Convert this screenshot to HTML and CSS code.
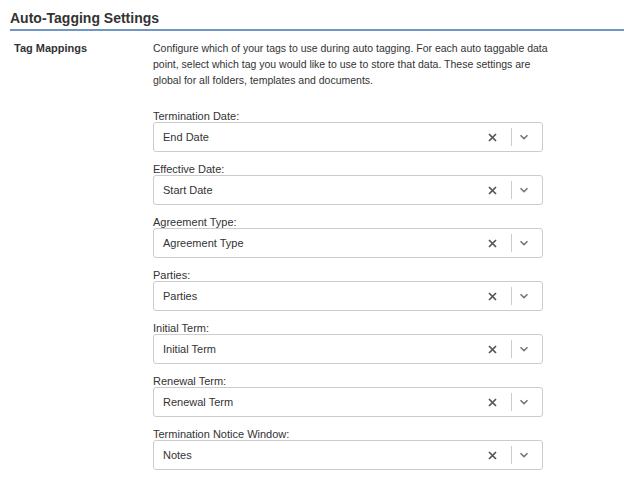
FILE: index.html
```html
<!DOCTYPE html>
<html lang="en">
<head>
    <meta charset="UTF-8">
    <title>Auto-Tagging Settings</title>
    <link rel="stylesheet" href="styles.css">
</head>
<body>
    <h2 class="section-title">Auto-Tagging Settings</h2>

    <div class="setting-row">
        <div class="setting-name">Tag Mappings</div>
        <div class="setting-body">
            <p class="setting-desc">Configure which of your tags to use during auto tagging. For each auto taggable data point, select which tag you would like to use to store that data. These settings are global for all folders, templates and documents.</p>

            <div class="field">
                <label>Termination Date:</label>
                <div class="select">
                    <span class="select-value">End Date</span>
                    <svg class="clear" width="9" height="9" viewBox="0 0 9 9"><path d="M1 1 L8 8 M8 1 L1 8" stroke="#555" stroke-width="1.7"/></svg>
                    <span class="sep"></span>
                    <svg class="chev" width="10" height="6" viewBox="0 0 10 6"><path d="M1.5 1.2 L5 4.6 L8.5 1.2" fill="none" stroke="#777" stroke-width="1.6"/></svg>
                </div>
            </div>

            <div class="field">
                <label>Effective Date:</label>
                <div class="select">
                    <span class="select-value">Start Date</span>
                    <svg class="clear" width="9" height="9" viewBox="0 0 9 9"><path d="M1 1 L8 8 M8 1 L1 8" stroke="#555" stroke-width="1.7"/></svg>
                    <span class="sep"></span>
                    <svg class="chev" width="10" height="6" viewBox="0 0 10 6"><path d="M1.5 1.2 L5 4.6 L8.5 1.2" fill="none" stroke="#777" stroke-width="1.6"/></svg>
                </div>
            </div>

            <div class="field">
                <label>Agreement Type:</label>
                <div class="select">
                    <span class="select-value">Agreement Type</span>
                    <svg class="clear" width="9" height="9" viewBox="0 0 9 9"><path d="M1 1 L8 8 M8 1 L1 8" stroke="#555" stroke-width="1.7"/></svg>
                    <span class="sep"></span>
                    <svg class="chev" width="10" height="6" viewBox="0 0 10 6"><path d="M1.5 1.2 L5 4.6 L8.5 1.2" fill="none" stroke="#777" stroke-width="1.6"/></svg>
                </div>
            </div>

            <div class="field">
                <label>Parties:</label>
                <div class="select">
                    <span class="select-value">Parties</span>
                    <svg class="clear" width="9" height="9" viewBox="0 0 9 9"><path d="M1 1 L8 8 M8 1 L1 8" stroke="#555" stroke-width="1.7"/></svg>
                    <span class="sep"></span>
                    <svg class="chev" width="10" height="6" viewBox="0 0 10 6"><path d="M1.5 1.2 L5 4.6 L8.5 1.2" fill="none" stroke="#777" stroke-width="1.6"/></svg>
                </div>
            </div>

            <div class="field">
                <label>Initial Term:</label>
                <div class="select">
                    <span class="select-value">Initial Term</span>
                    <svg class="clear" width="9" height="9" viewBox="0 0 9 9"><path d="M1 1 L8 8 M8 1 L1 8" stroke="#555" stroke-width="1.7"/></svg>
                    <span class="sep"></span>
                    <svg class="chev" width="10" height="6" viewBox="0 0 10 6"><path d="M1.5 1.2 L5 4.6 L8.5 1.2" fill="none" stroke="#777" stroke-width="1.6"/></svg>
                </div>
            </div>

            <div class="field">
                <label>Renewal Term:</label>
                <div class="select">
                    <span class="select-value">Renewal Term</span>
                    <svg class="clear" width="9" height="9" viewBox="0 0 9 9"><path d="M1 1 L8 8 M8 1 L1 8" stroke="#555" stroke-width="1.7"/></svg>
                    <span class="sep"></span>
                    <svg class="chev" width="10" height="6" viewBox="0 0 10 6"><path d="M1.5 1.2 L5 4.6 L8.5 1.2" fill="none" stroke="#777" stroke-width="1.6"/></svg>
                </div>
            </div>

            <div class="field">
                <label>Termination Notice Window:</label>
                <div class="select">
                    <span class="select-value">Notes</span>
                    <svg class="clear" width="9" height="9" viewBox="0 0 9 9"><path d="M1 1 L8 8 M8 1 L1 8" stroke="#555" stroke-width="1.7"/></svg>
                    <span class="sep"></span>
                    <svg class="chev" width="10" height="6" viewBox="0 0 10 6"><path d="M1.5 1.2 L5 4.6 L8.5 1.2" fill="none" stroke="#777" stroke-width="1.6"/></svg>
                </div>
            </div>
        </div>
    </div>
</body>
</html>
```

FILE: styles.css
```css
body {
    font-family: 'Liberation Sans', Arial, sans-serif;
    margin: 0;
    background-color: #fff;
    color: #333;
    font-size: 11px;
}

.section-title {
    margin: 0 0 0 10px;
    padding: 10px 0 3px 0;
    font-size: 14px;
    line-height: 16px;
    font-weight: bold;
    color: #333;
    border-bottom: 2px solid #7196c4;
}

.setting-row {
    display: flex;
    padding-top: 9px;
}

.setting-name {
    width: 139px;
    padding-left: 14px;
    font-weight: bold;
    font-size: 11px;
    line-height: 16px;
}

.setting-body {
    width: 390px;
}

.setting-desc {
    margin: 0 0 22px 0;
    font-size: 10.5px;
    line-height: 16px;
    width: 400px;
}

.field {
    margin-bottom: 11px;
}

.field label {
    display: block;
    font-size: 11px;
    line-height: 12px;
}

.select {
    display: flex;
    align-items: center;
    height: 28px;
    border: 1px solid #ccc;
    border-radius: 3px;
    padding: 0 13px 0 9px;
}

.select-value {
    flex: 1;
    font-size: 11px;
}

.clear {
    display: block;
    margin-right: 14px;
}

.sep {
    width: 1px;
    height: 18px;
    background-color: #ccc;
    margin-right: 7px;
}

.chev {
    display: block;
}
```
